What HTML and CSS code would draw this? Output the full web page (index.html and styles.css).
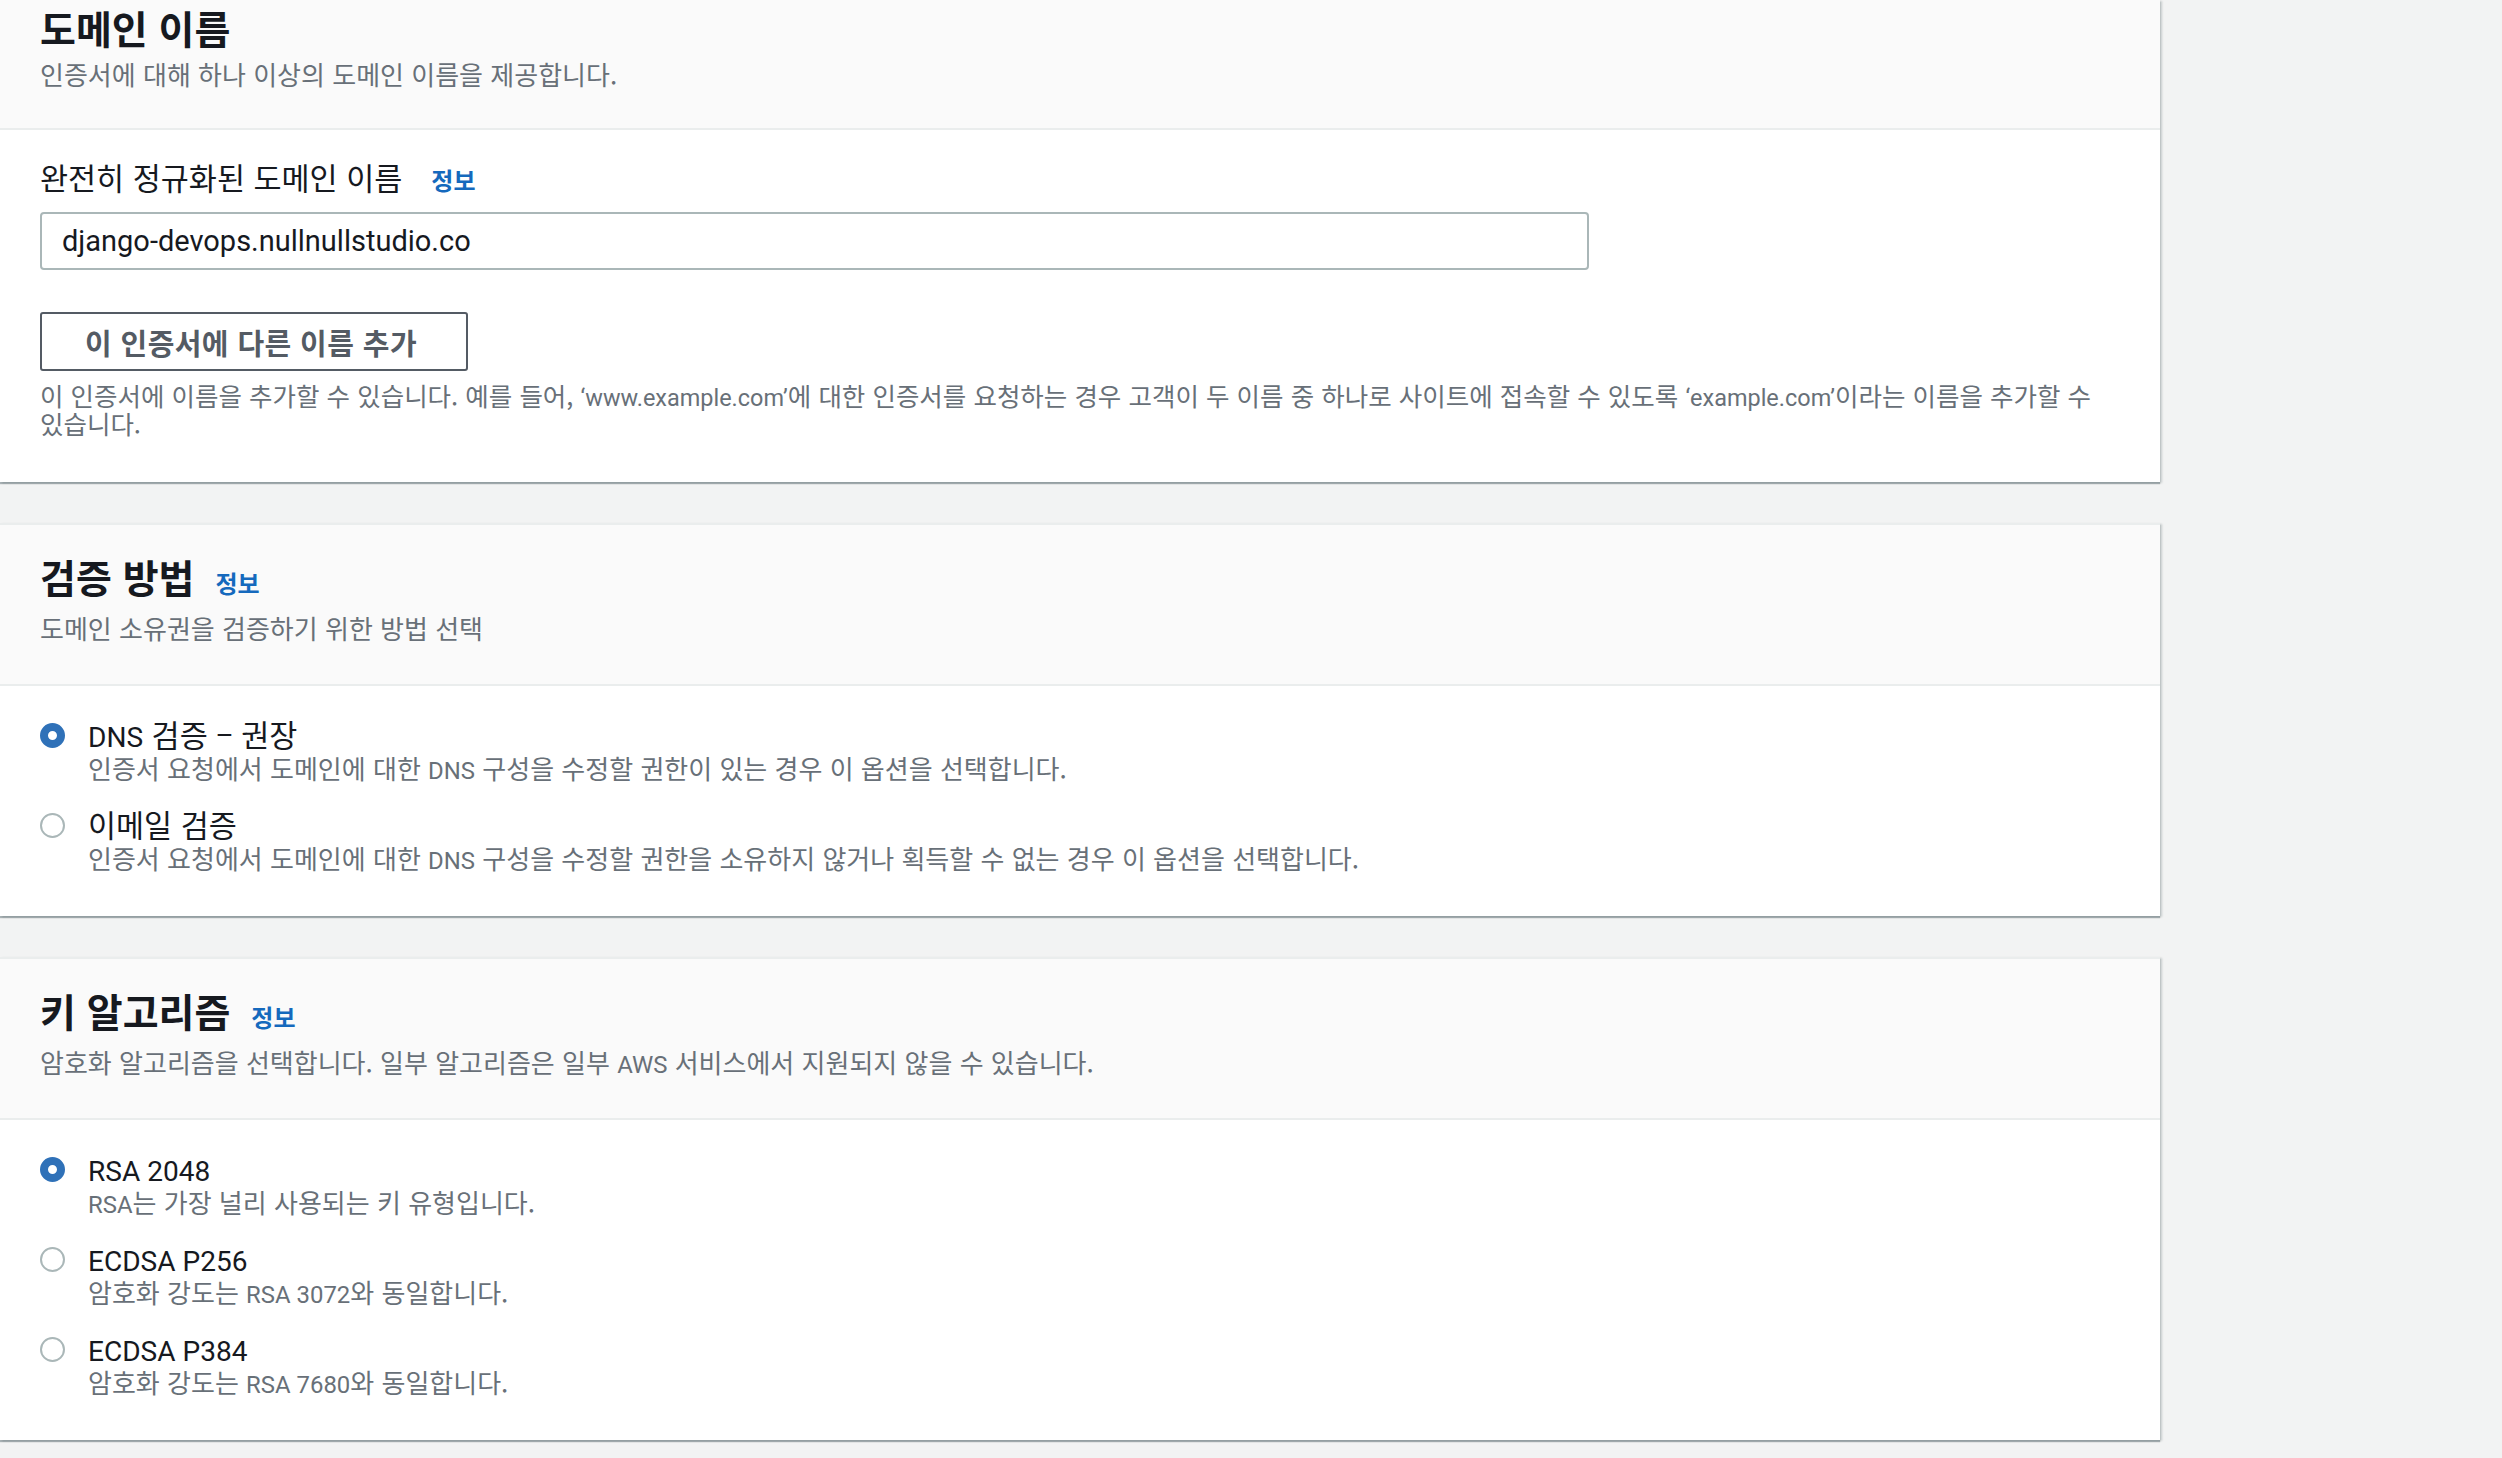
FILE: index.html
```html
<!DOCTYPE html>
<html lang="ko">
<head>
<meta charset="utf-8">
<title>인증서 요청</title>
<link rel="stylesheet" href="styles.css">
</head>
<body>
<main class="page">
  <section class="card card--first">
    <div class="card-header card-header--first">
      <h2 class="card-title card-title--plain">도메인 이름</h2>
      <p class="card-desc">인증서에 대해 하나 이상의 도메인 이름을 제공합니다.</p>
    </div>
    <div class="card-body card-body--form">
      <div class="field-label">
        <span>완전히 정규화된 도메인 이름</span>
        <a class="info-link" href="#">정보</a>
      </div>
      <div class="text-input">django-devops.nullnullstudio.co</div>
      <button class="btn" type="button">이 인증서에 다른 이름 추가</button>
      <p class="help-text">이 인증서에 이름을 추가할 수 있습니다. 예를 들어, <span class="latin">‘www.example.com’</span>에 대한 인증서를 요청하는 경우 고객이 두 이름 중 하나로 사이트에 접속할 수 있도록 <span class="latin">‘example.com’</span>이라는 이름을 추가할 수 있습니다.</p>
    </div>
  </section>

  <section class="card">
    <div class="card-header">
      <h2 class="card-title"><span>검증 방법</span><a class="info-link" href="#">정보</a></h2>
      <p class="card-desc">도메인 소유권을 검증하기 위한 방법 선택</p>
    </div>
    <div class="card-body card-body--radios">
      <div class="radio-item">
        <span class="radio radio--checked"></span>
        <div class="radio-text">
          <div class="radio-label"><span class="latin">DNS</span> 검증 – 권장</div>
          <div class="radio-desc">인증서 요청에서 도메인에 대한 <span class="latin">DNS</span> 구성을 수정할 권한이 있는 경우 이 옵션을 선택합니다.</div>
        </div>
      </div>
      <div class="radio-item">
        <span class="radio"></span>
        <div class="radio-text">
          <div class="radio-label">이메일 검증</div>
          <div class="radio-desc">인증서 요청에서 도메인에 대한 <span class="latin">DNS</span> 구성을 수정할 권한을 소유하지 않거나 획득할 수 없는 경우 이 옵션을 선택합니다.</div>
        </div>
      </div>
    </div>
  </section>

  <section class="card">
    <div class="card-header">
      <h2 class="card-title"><span>키 알고리즘</span><a class="info-link" href="#">정보</a></h2>
      <p class="card-desc">암호화 알고리즘을 선택합니다. 일부 알고리즘은 일부 <span class="latin">AWS</span> 서비스에서 지원되지 않을 수 있습니다.</p>
    </div>
    <div class="card-body card-body--radios">
      <div class="radio-item">
        <span class="radio radio--checked"></span>
        <div class="radio-text">
          <div class="radio-label"><span class="latin">RSA 2048</span></div>
          <div class="radio-desc"><span class="latin">RSA</span>는 가장 널리 사용되는 키 유형입니다.</div>
        </div>
      </div>
      <div class="radio-item">
        <span class="radio"></span>
        <div class="radio-text">
          <div class="radio-label"><span class="latin">ECDSA P256</span></div>
          <div class="radio-desc">암호화 강도는 <span class="latin">RSA 3072</span>와 동일합니다.</div>
        </div>
      </div>
      <div class="radio-item">
        <span class="radio"></span>
        <div class="radio-text">
          <div class="radio-label"><span class="latin">ECDSA P384</span></div>
          <div class="radio-desc">암호화 강도는 <span class="latin">RSA 7680</span>와 동일합니다.</div>
        </div>
      </div>
    </div>
  </section>
</main>
</body>
</html>
```

FILE: styles.css
```css
html, body {
  margin: 0;
  padding: 0;
}

body {
  background: #f2f3f3;
  font-family: "Noto Sans CJK KR", "Noto Sans", sans-serif;
  color: #16191f;
  min-height: 1458px;
  word-break: keep-all;
}

.latin {
  font-family: "Roboto", "Noto Sans CJK KR", sans-serif;
  font-size: 0.92em;
  line-height: 0;
}

.page {
  width: 2160px;
  display: flex;
  flex-direction: column;
  gap: 41px;
}

.card {
  background: #ffffff;
  border-top: 2px solid #eaeded;
  box-shadow: 0 2px 1px 0 rgba(0, 28, 36, 0.3), 2px 1px 2px 0 rgba(0, 28, 36, 0.18);
}

.card--first {
  border-top: 0;
}

.card-header {
  background: #fafafa;
  padding: 27px 40px 39px;
  border-bottom: 2px solid #eaeded;
}

.card-header--first {
  padding-top: 5px;
  padding-bottom: 37px;
}

.card-title {
  margin: 0;
  font-size: 39px;
  font-weight: 700;
  line-height: 48px;
  color: #16191f;
  display: flex;
  align-items: baseline;
  gap: 21px;
}

.card-title--plain {
  line-height: 44px;
}

.card-desc {
  margin: 10px 0 0;
  font-size: 26px;
  line-height: 35px;
  color: #687078;
}

.card-header--first .card-desc {
  margin-top: 7px;
}

.info-link {
  font-size: 24px;
  font-weight: 700;
  line-height: 1;
  color: #1569bd;
  text-decoration: none;
}

.card-body {
  padding: 0 40px;
}

.card-body--form {
  padding-top: 28px;
  padding-bottom: 45px;
  display: flex;
  flex-direction: column;
  align-items: flex-start;
}

.field-label {
  font-size: 30.5px;
  line-height: 38px;
  color: #16191f;
  display: flex;
  align-items: baseline;
  gap: 29px;
}

.text-input {
  margin-top: 16px;
  width: 1549px;
  height: 58px;
  box-sizing: border-box;
  border: 2px solid #aab7b8;
  border-radius: 4px;
  padding: 0 20px;
  display: flex;
  align-items: center;
  font-family: "Roboto", "Noto Sans CJK KR", sans-serif;
  font-size: 29px;
  color: #16191f;
  background: #ffffff;
}

.btn {
  margin-top: 42px;
  height: 59px;
  box-sizing: border-box;
  padding: 0 49px 0 43px;
  border: 2px solid #545b64;
  border-radius: 3px;
  background: #ffffff;
  color: #545b64;
  font-family: inherit;
  font-size: 29px;
  font-weight: 700;
  letter-spacing: 0.4px;
}

.help-text {
  margin: 10px 0 0;
  font-size: 25.5px;
  line-height: 28px;
  color: #687078;
}

.card-body--radios {
  padding-top: 31px;
  padding-bottom: 41px;
  display: flex;
  flex-direction: column;
  gap: 22px;
}

.radio-item {
  display: flex;
  align-items: flex-start;
  gap: 23px;
}

.radio {
  flex: none;
  width: 25px;
  height: 25px;
  margin-top: 6px;
  box-sizing: border-box;
  border-radius: 50%;
  border: 2px solid #aab7b8;
  background: #ffffff;
}

.radio--checked {
  border: 8px solid #2f71b8;
}

.radio-label {
  font-size: 30.5px;
  line-height: 34px;
  color: #16191f;
}

.radio-desc {
  font-size: 26px;
  line-height: 34px;
  color: #687078;
}
```
